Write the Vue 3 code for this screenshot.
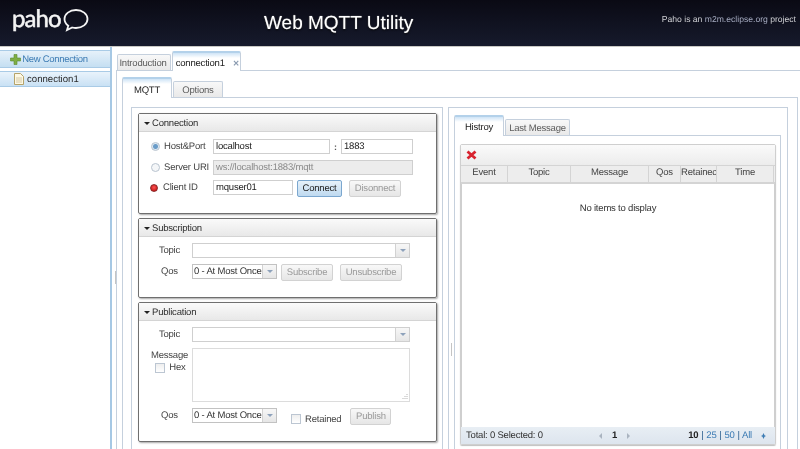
<script setup>
const columns = [
  { name: 'Event', width: 47 },
  { name: 'Topic', width: 63 },
  { name: 'Message', width: 78 },
  { name: 'Qos', width: 32 },
  { name: 'Retained', width: 36 },
  { name: 'Time', width: 57 }
]
</script>

<template>
  <div class="page">
    <header class="top">
      <div class="logo">
        <span class="logo-text">paho</span>
        <svg class="bubble" width="26" height="23" viewBox="0 0 26 23">
          <path d="M13 1c6.400 0 11.500 4 11.500 9s-5.100 9-11.500 9c-1.300 0-2.600-.2-3.800-.5L4 21l1.300-4.300C3 15.100 1.500 12.700 1.500 10 1.500 5 6.600 1 13 1z" fill="none" stroke="#f4f4f4" stroke-width="1.800" />
        </svg>
      </div>
      <h1 class="title">Web MQTT Utility</h1>
      <div class="project">Paho is an <a>m2m.eclipse.org</a> project</div>
    </header>

    <div class="body">
      <aside class="side">
        <div class="new-conn">
          <svg width="11" height="11" viewBox="0 0 11 11"><path d="M4 .5h3v3.500h3.500v3H7v3.500H4V7H.5V4H4z" fill="#7fae45" stroke="#5c8a30" stroke-width=".6" /></svg>
          <span>New Connection</span>
        </div>
        <div class="conn-row">
          <svg width="10" height="12" viewBox="0 0 10 12"><path d="M.5.500h6l3 3v8h-9z" fill="#fdf8e4" stroke="#b5a36a" /><path d="M2 5h6M2 7h6M2 9h6" stroke="#c9bd94" stroke-width=".8" /></svg>
          <span>connection1</span>
        </div>
      </aside>

      <main class="main">
        <i class="grip grip-side"></i>
        <div class="tabs tabs-top">
          <div class="tab intro">Introduction</div>
          <div class="tab tab-on conn-tab">connection1 <span class="close">✕</span></div>
        </div>
        <div class="conn-pane">
          <div class="tabs tabs-mid">
            <div class="tab tab-on mqtt">MQTT</div>
            <div class="tab options">Options</div>
          </div>
          <div class="mid-pane">
            <section class="left-box">
              <div class="panel panel-conn">
                <div class="panel-title"><i class="caret"></i>Connection</div>
                <div class="panel-body conn-body">
                  <div class="row">
                    <span class="radio radio-on"></span><label class="lbl-radio">Host&amp;Port</label>
                    <span class="input w-host">localhost</span><b class="colon">:</b><span class="input w-port">1883</span>
                  </div>
                  <div class="row">
                    <span class="radio"></span><label class="lbl-radio">Server URI</label>
                    <span class="input input-off w-uri">ws://localhost:1883/mqtt</span>
                  </div>
                  <div class="row">
                    <span class="led"></span><label class="lbl-led">Client ID</label>
                    <span class="input w-client">mquser01</span>
                    <button class="btn btn-main">Connect</button>
                    <button class="btn btn-off">Disonnect</button>
                  </div>
                </div>
              </div>

              <div class="panel panel-sub">
                <div class="panel-title"><i class="caret"></i>Subscription</div>
                <div class="panel-body sub-body">
                  <div class="row">
                    <label class="lbl-form">Topic</label>
                    <span class="combo w-topic"><span class="combo-val"></span><span class="arrow"></span></span>
                  </div>
                  <div class="row">
                    <label class="lbl-form">Qos</label>
                    <span class="combo w-qos"><span class="combo-val">0 - At Most Once</span><span class="arrow"></span></span>
                    <button class="btn btn-off btn-sub">Subscribe</button>
                    <button class="btn btn-off btn-unsub">Unsubscribe</button>
                  </div>
                </div>
              </div>

              <div class="panel panel-pub">
                <div class="panel-title"><i class="caret"></i>Publication</div>
                <div class="panel-body pub-body">
                  <div class="row">
                    <label class="lbl-form">Topic</label>
                    <span class="combo w-topic"><span class="combo-val"></span><span class="arrow"></span></span>
                  </div>
                  <div class="msg-row">
                    <div class="msg-label">
                      <label>Message</label>
                      <div class="hex"><span class="check"></span><label>Hex</label></div>
                    </div>
                    <div class="textarea">
                      <svg class="resize" width="6" height="6" viewBox="0 0 6 6"><path d="M5 0v1M3 2v1M5 2v1M1 4v1M3 4v1M5 4v1" stroke="#b5b5b5" /></svg>
                    </div>
                  </div>
                  <div class="row">
                    <label class="lbl-form">Qos</label>
                    <span class="combo w-qos"><span class="combo-val">0 - At Most Once</span><span class="arrow"></span></span>
                    <span class="check check-ret"></span><label class="lbl-ret">Retained</label>
                    <button class="btn btn-off btn-pub">Publish</button>
                  </div>
                </div>
              </div>
            </section>

            <i class="grip grip-mid"></i>

            <section class="right-box">
              <div class="tabs tabs-hist">
                <div class="tab tab-on hist">Histroy</div>
                <div class="tab last">Last Message</div>
              </div>
              <div class="hist-pane">
                <div class="grid">
                  <div class="grid-tool">
                    <svg width="11" height="10" viewBox="0 0 11 10"><path d="M1.500 1.500l8 7M9.500 1.500l-8 7" stroke="#d8232f" stroke-width="2.800" /></svg>
                  </div>
                  <div class="grid-head">
                    <div v-for="c in columns" :key="c.name" class="grid-col" :style="{ width: c.width + 'px' }"><span>{{ c.name }}</span></div>
                  </div>
                  <div class="grid-body">No items to display</div>
                  <div class="grid-foot">
                    <span class="total">Total: 0 Selected: 0</span>
                    <span class="pager"><i class="tri tri-l"></i><b>1</b><i class="tri tri-r"></i></span>
                    <span class="sizes"><b>10</b> | <a>25</a> | <a>50</a> | <a>All</a></span>
                    <svg class="more" width="5" height="6" viewBox="0 0 5 6"><path d="M2.500 0l1 2.200L5 3 3.500 3.800 2.500 6l-1-2.200L0 3l1.500-.8z" fill="#3d7cb4" /></svg>
                  </div>
                </div>
              </div>
            </section>
          </div>
        </div>
      </main>
    </div>
  </div>
</template>

<style>
html, body { margin: 0; background: #fff; overflow: hidden; }
</style>

<style scoped>
.page {
  width: 800px;
  height: 449px;
  overflow: hidden;
  display: flex;
  flex-direction: column;
  font-family: "Liberation Sans", Arial, sans-serif;
  font-size: 9.500px;
  letter-spacing: -.2px;
  color: #2b2b2b;
  background: #fff;
  text-rendering: geometricPrecision;
  filter: blur(.3px);
}
.top {
  height: 46px;
  flex: none;
  display: flex;
  align-items: center;
  background: linear-gradient(#0a0a14, #161a2c);
  border-bottom: 1px solid #c9c9c4;
}
.logo {
  width: 264px;
  display: flex;
  align-items: flex-start;
  padding-left: 12px;
  box-sizing: border-box;
  height: 46px;
}
.logo-text {
  font-family: "Lato", sans-serif;
  font-size: 24px;
  line-height: 24px;
  letter-spacing: -.9px;
  margin-top: 7px;
  color: #f4f4f4;
  -webkit-text-stroke: .5px #f4f4f4;
}
.bubble { margin-top: 9px; margin-left: 2px; }
.title {
  margin: 1px 0 0;
  font-size: 19px;
  font-weight: 400;
  letter-spacing: 0;
  color: #fff;
  flex: 1;
  text-shadow: 0 1px 2px #000, 0 0 1px #fff;
}
.project {
  font-size: 8.600px;
  letter-spacing: 0;
  color: #cfd0d4;
  padding-right: 4px;
  margin-bottom: 8px;
}
.project a { color: #a5abc0; }
.body { flex: 1; display: flex; min-height: 0; }
.side {
  width: 110px;
  flex: none;
  border-right: 2px solid #a6c8e4;
  padding-top: 3px;
}
.new-conn {
  height: 16px;
  display: flex;
  align-items: center;
  justify-content: center;
  gap: 1px;
  letter-spacing: -.3px;
  color: #3d7cb4;
  background: linear-gradient(#e6f1fa, #c5dff2);
  border-top: 1px solid #a9cbe6;
  border-bottom: 1px solid #a9cbe6;
  padding-right: 12px;
}
.conn-row {
  margin-top: 3px;
  height: 14px;
  display: flex;
  align-items: center;
  gap: 3px;
  padding-left: 14px;
  font-size: 9.600px;
  letter-spacing: 0;
  background: linear-gradient(#e9f3fb, #c9e1f4);
  border-top: 1px solid #a9cbe6;
  border-bottom: 1px solid #a9cbe6;
}
.main {
  flex: 1;
  margin-left: 4px;
  display: flex;
  flex-direction: column;
  min-width: 0;
  position: relative;
}
.grip {
  position: absolute;
  width: 1px;
  height: 13px;
  background: #c4c4c4;
}
.grip-side { left: -1px; top: 224px; }
.grip-mid { left: 328px; top: 245px; }
.tabs { display: flex; align-items: flex-end; gap: 1px; flex: none; }
.tab {
  box-sizing: border-box;
  display: flex;
  align-items: center;
  justify-content: center;
  height: 16px;
  margin-bottom: -1px;
  color: #5c5c5c;
  background: linear-gradient(#f8f8f8, #e8e8e8);
  border: 1px solid #c5d0dd;
  border-bottom: none;
  border-radius: 2px 2px 0 0;
}
.tab-on {
  height: 20px;
  padding-top: 2px;
  color: #222;
  background: linear-gradient(#cfe4f6, #fff 5px);
  border-top: 2px solid #b3d1ea;
  z-index: 1;
}
.tabs-top { height: 20px; padding: 3px 0 0 1px; }
.intro { width: 54px; height: 17px; padding: 1px 2px 0 0; }
.conn-tab { width: 69px; gap: 8px; padding-left: 2px; }
.close { color: #8a9ab0; font-size: 8px; font-weight: 700; }
.conn-pane {
  flex: 1;
  border-top: 1px solid #c5d0dd;
  border-left: 1px solid #c5d0dd;
  padding: 6px 2px 0 5px;
  display: flex;
  flex-direction: column;
  min-height: 0;
}
.mqtt { width: 50px; height: 21px; padding-top: 3px; }
.options { width: 50px; height: 17px; padding-top: 0; }
.tabs-mid { height: 20px; }
.mid-pane {
  flex: 1;
  border: 1px solid #c5d0dd;
  border-bottom: none;
  padding: 9px 8px 0 8px;
  display: flex;
  gap: 5px;
  position: relative;
}
.left-box {
  width: 312px;
  height: 400px;
  flex: none;
  box-sizing: border-box;
  border: 1px solid #c5d0dd;
  padding: 5px 5px 0 6px;
  display: flex;
  flex-direction: column;
  gap: 4px;
}
.panel {
  box-sizing: border-box;
  border: 1px solid #6f6f6f;
  border-radius: 2px;
  box-shadow: 1px 1px 2px rgba(0, 0, 0, .35);
  flex: none;
}
.panel-conn { height: 101px; }
.panel-sub { height: 80px; }
.panel-pub { height: 140px; }
.panel-title {
  box-sizing: border-box;
  height: 18px;
  display: flex;
  align-items: center;
  padding: 1px 0 0 5px;
  color: #2e2e2e;
  background: linear-gradient(#fafafa, #e8e8e8);
  border-bottom: 1px solid #d4d4d4;
}
.caret {
  width: 0;
  height: 0;
  margin-right: 2px;
  border: 3px solid transparent;
  border-top: 3px solid #222;
  border-bottom: none;
}
.panel-body { display: flex; flex-direction: column; }
.conn-body { padding: 7px 0 0 12px; gap: 5.500px; }
.sub-body { padding: 6px 0 0 0; gap: 6px; }
.pub-body { padding: 6px 0 0 0; gap: 6px; }
.row { display: flex; align-items: center; height: 15px; white-space: nowrap; }
.input {
  box-sizing: border-box;
  display: block;
  height: 15px;
  line-height: 13px;
  padding-left: 2px;
  border: 1px solid #cfcfcf;
  color: #222;
  background: #fff;
}
.input-off { background: #ececec; color: #8a8a8a; }
.radio {
  box-sizing: border-box;
  width: 9px;
  height: 9px;
  border-radius: 50%;
  border: 1px solid #b9c4cf;
  background: #f4f6f8;
  flex: none;
}
.radio-on { background: radial-gradient(circle, #6a9cc8 0 2px, #dce8f2 3px); }
.lbl-radio { margin-left: 4px; width: 49px; flex: none; color: #444; }
.led {
  box-sizing: border-box;
  width: 8px;
  height: 8px;
  margin-left: -1px;
  border-radius: 50%;
  background: radial-gradient(circle at 50% 40%, #f55 0, #c51616 80%);
  border: 1px solid #8a2a2a;
  flex: none;
}
.lbl-led { margin-left: 5px; width: 50px; flex: none; color: #444; }
.w-host { width: 117px; }
.colon { width: 11px; text-align: center; color: #555; font-size: 9px; }
.w-port { width: 72px; }
.w-uri { width: 200px; }
.w-client { width: 80px; }
.btn {
  box-sizing: border-box;
  height: 17px;
  padding: 0;
  margin-top: 2px;
  border-radius: 2px;
  font-family: inherit;
  font-size: 9.500px;
  letter-spacing: -.2px;
  text-rendering: inherit;
  margin-left: 4px;
}
.btn-main {
  width: 45px;
  color: #222;
  background: linear-gradient(#e6f1fa, #bfdaf0);
  border: 1px solid #7ba7cf;
}
.btn-off {
  color: #9a9a9a;
  background: linear-gradient(#f8f8f8, #e6e6e6);
  border: 1px solid #d2d2d2;
}
.row .btn-off { width: 52px; margin-left: 7px; }
.row .btn-sub { width: 52px; margin-left: 4px; }
.row .btn-unsub { width: 62px; margin-left: 7px; }
.row .btn-pub { width: 41px; margin-left: 9px; }
.lbl-form { width: 53px; flex: none; text-align: center; padding-left: 8px; box-sizing: border-box; color: #444; }
.combo {
  box-sizing: border-box;
  height: 15px;
  display: flex;
  border: 1px solid #cfcfcf;
  background: #fff;
  flex: none;
}
.w-topic { width: 218px; }
.w-qos { width: 85px; border-color: #c2c2c2; }
.combo-val { flex: 1; min-width: 0; padding-left: 1px; line-height: 13px; color: #333; white-space: nowrap; }
.arrow {
  width: 13px;
  flex: none;
  background: linear-gradient(#f7f7f7, #e6e6e6);
  border-left: 1px solid #d2d2d2;
  position: relative;
}
.arrow::after {
  content: "";
  position: absolute;
  left: 4px;
  top: 5px;
  border: 3px solid transparent;
  border-top: 3px solid #8ea2bb;
  border-bottom: none;
}
.msg-row { display: flex; height: 54px; }
.msg-label {
  width: 53px;
  flex: none;
  color: #444;
  display: flex;
  flex-direction: column;
  align-items: center;
  padding: 2px 0 0 8px;
  box-sizing: border-box;
  line-height: 12px;
}
.hex { display: flex; align-items: center; gap: 4px; margin-left: 2px; }
.check {
  box-sizing: border-box;
  width: 10px;
  height: 10px;
  border: 1px solid #bcc6d2;
  background: linear-gradient(#eee, #fff);
  flex: none;
}
.textarea {
  box-sizing: border-box;
  width: 218px;
  height: 54px;
  border: 1px solid #dcdcdc;
  position: relative;
}
.resize { position: absolute; right: 1px; bottom: 1px; }
.check-ret { margin-left: 14px; margin-top: 7px; }
.lbl-ret { margin-left: 4px; margin-top: 7px; color: #444; }
.right-box {
  width: 340px;
  height: 400px;
  flex: none;
  box-sizing: border-box;
  border: 1px solid #c5d0dd;
  padding: 6px 6px 0 5px;
  display: flex;
  flex-direction: column;
}
.tabs-hist { height: 21px; }
.hist { width: 50px; height: 21px; padding-top: 2px; }
.last { width: 65px; height: 17px; padding-top: 0; }
.hist-pane {
  flex: 1;
  border: 1px solid #c5d0dd;
  border-bottom: none;
  padding: 8px 5px 0 5px;
}
.grid {
  width: 316px;
  height: 301px;
  box-sizing: border-box;
  display: flex;
  flex-direction: column;
  border: 1px solid #cfcfcf;
  border-radius: 2px;
  box-shadow: 0 1px 1px rgba(0, 0, 0, .25);
}
.grid-tool {
  height: 20px;
  display: flex;
  align-items: center;
  padding-left: 5px;
  background: linear-gradient(#fafafa, #ececec);
  border-bottom: 1px solid #d4d4d4;
}
.grid-head {
  height: 16px;
  display: flex;
  background: #ededed;
  border-bottom: 2px solid #d4d4d4;
}
.grid-col {
  box-sizing: border-box;
  text-align: center;
  line-height: 14px;
  border-right: 1px solid #d4d4d4;
  overflow: hidden;
  white-space: nowrap;
  color: #444;
}
.grid-body {
  flex: 1;
  text-align: center;
  padding-top: 19px;
  color: #333;
  border-left: 1px solid #cfcfcf;
  border-right: 1px solid #cfcfcf;
}
.grid-foot {
  height: 17px;
  display: flex;
  align-items: center;
  padding: 0 9px 0 5px;
  background: linear-gradient(#e8eef4, #dde5ee);
  color: #333;
}
.total { width: 133px; }
.pager { flex: 1; display: flex; align-items: center; gap: 10px; }
.pager b { color: #222; }
.tri { width: 0; height: 0; border: 3px solid transparent; }
.tri-l { border-right: 3px solid #aab4c0; border-left: none; }
.tri-r { border-left: 3px solid #aab4c0; border-right: none; }
.sizes { color: #2a5f8f; word-spacing: .4px; }
.sizes b { color: #222; }
.sizes a { color: #3d7cb4; }
.more { margin-left: 9px; }
</style>
